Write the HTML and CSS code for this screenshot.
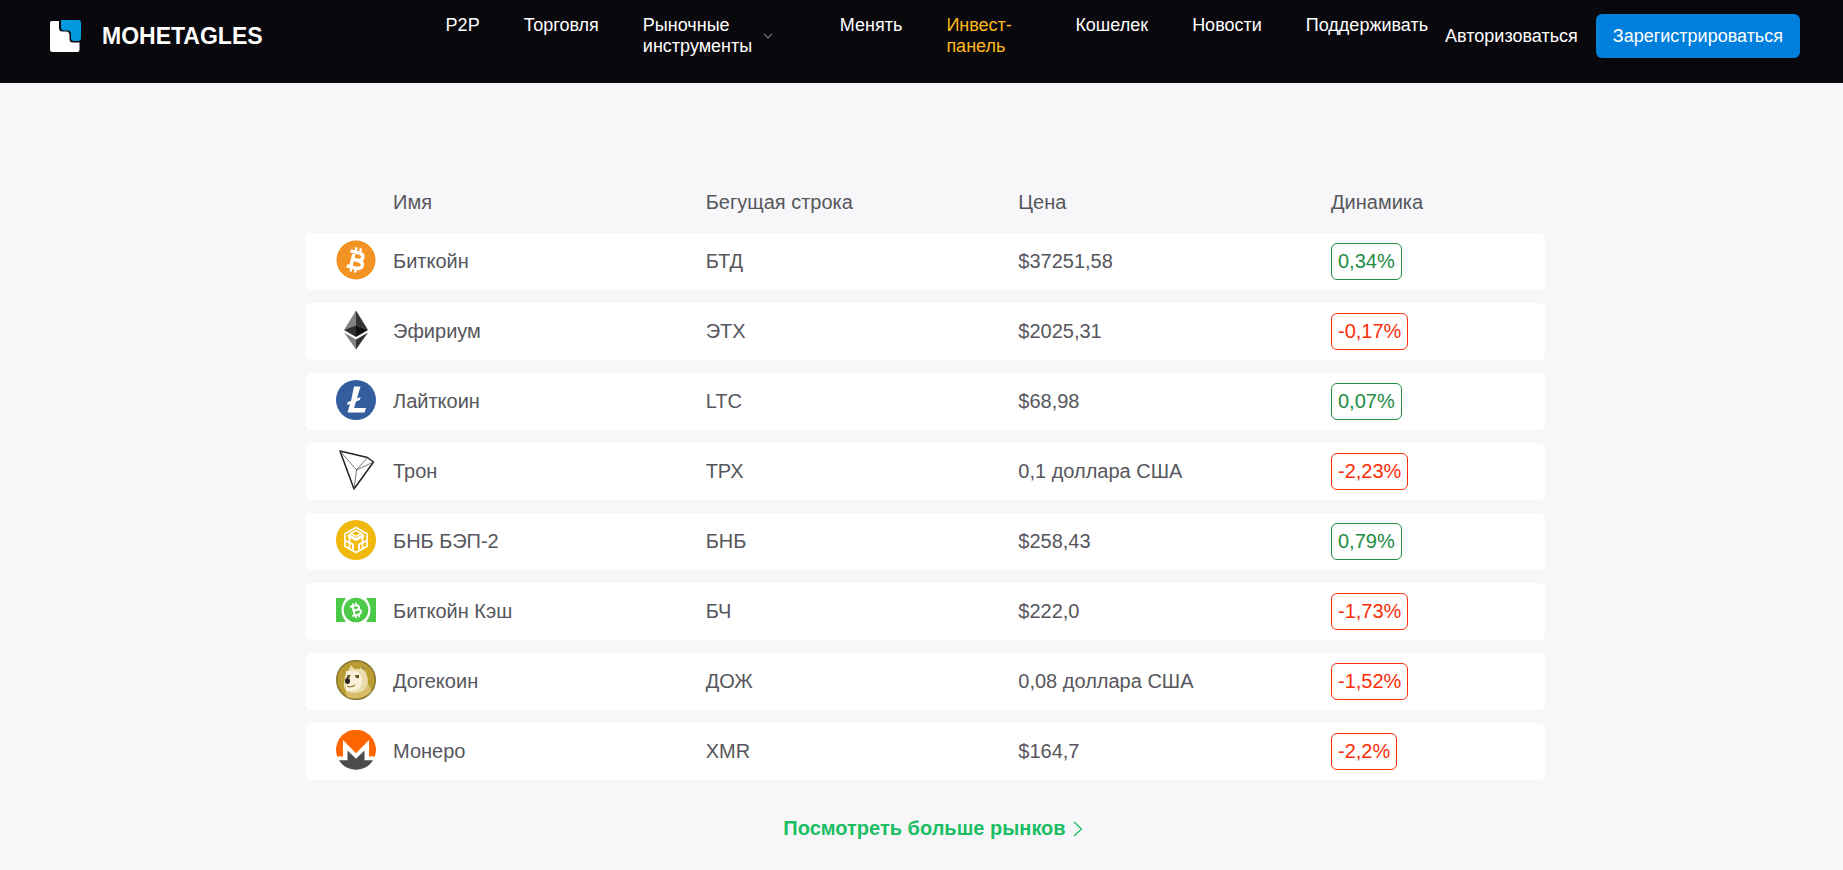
FILE: index.html
```html
<!DOCTYPE html>
<html lang="ru">

<head>
    <meta charset="UTF-8">
    <meta name="viewport" content="width=device-width, initial-scale=1.0">
    <title>MOHETAGLES</title>
    <link rel="stylesheet" href="styles.css">
</head>

<body>
    <header class="header">
        <a href="#" class="logo">
            <svg width="32" height="32" viewBox="0 0 32 32">
                <path d="M1.500 1H9v7q0 3.500 3.500 3.500H16q3.500 0 3.500 3.500v4q0 3.500 3.500 3.500h6.500V30q0 2-2 2h-25Q0 32 0 29.500V3q0-2 1.500-2z" fill="#fff" />
                <path d="M11 0h17.500Q31 0 31 2.500V18q0 3-3 3h-4q-3 0-3-3v-4q0-3.500-3.500-3.500H14q-3 0-3-3z" fill="#0099e0" />
            </svg>
            <span>MOHETAGLES</span>
        </a>
        <nav class="nav">
            <a href="#">P2P</a>
            <a href="#">Торговля</a>
            <a href="#" class="dropdown">
                <span>Рыночные инструменты</span>
                <svg width="10" height="6" viewBox="0 0 10 6">
                    <path d="M1 1l4 4 4-4" fill="none" stroke="#77777c" stroke-width="1.2" />
                </svg>
            </a>
            <a href="#">Менять</a>
            <a href="#" class="invest">Инвест-панель</a>
            <a href="#">Кошелек</a>
            <a href="#">Новости</a>
            <a href="#">Поддерживать</a>
        </nav>
        <div class="auth">
            <a href="#">Авторизоваться</a>
            <button type="button">Зарегистрироваться</button>
        </div>
    </header>

    <main class="markets">
        <table>
            <thead>
                <tr>
                    <td class="icon"></td>
                    <th>Имя</th>
                    <th>Бегущая строка</th>
                    <th>Цена</th>
                    <th class="change">Динамика</th>
                </tr>
            </thead>
            <tbody>
                <tr>
                    <td class="icon">
                        <svg width="40" height="40" viewBox="0 0 40 40">
                            <circle cx="20" cy="20" r="19.5" fill="#f39323" />
                            <g transform="rotate(14 20 20)" fill="none" stroke="#fff">
                                <path d="M12.5 12.5H21q5 0 5 3.7T21 20h-4.500M21 20q6.500 0 6.500 4T21 28h-8.500M16.500 12.500V28" stroke-width="3.4" />
                                <path d="M17.500 7.500v5M22 7.500v5M17.500 28v4.500M22 28v4.500" stroke-width="2.3" />
                            </g>
                        </svg>
                    </td>
                    <td>Биткойн</td>
                    <td>БТД</td>
                    <td>$37251,58</td>
                    <td><span class="badge up">0,34%</span></td>
                </tr>
                <tr>
                    <td class="icon">
                        <svg width="40" height="40" viewBox="0 0 40 40">
                            <path d="M20 .5v14.500L8 20z" fill="#828384" />
                            <path d="M20 .5V15l12 5z" fill="#343434" />
                            <path d="M20 15v12L8 20z" fill="#2f3030" />
                            <path d="M20 15v12l12-7z" fill="#131313" />
                            <path d="M8 22.500l12 7v10z" fill="#828384" />
                            <path d="M32 22.500l-12 7v10z" fill="#343434" />
                        </svg>
                    </td>
                    <td>Эфириум</td>
                    <td>ЭТХ</td>
                    <td>$2025,31</td>
                    <td><span class="badge down">-0,17%</span></td>
                </tr>
                <tr>
                    <td class="icon">
                        <svg width="40" height="40" viewBox="0 0 40 40">
                            <circle cx="20" cy="20" r="20" fill="#345d9d" />
                            <path d="M18 6.500h6.500l-3.600 12 3.700-1.400-.8 3-3.800 1.400-1.900 6.500H30L28.500 32.500H11.500l2.500-8.500-3 1.100.8-3 3.200-1.200z" fill="#fff" />
                        </svg>
                    </td>
                    <td>Лайткоин</td>
                    <td>LTC</td>
                    <td>$68,98</td>
                    <td><span class="badge up">0,07%</span></td>
                </tr>
                <tr>
                    <td class="icon">
                        <svg width="40" height="40" viewBox="0 0 40 40" fill="none" stroke-linejoin="round">
                            <path d="M4 1l27.500 6.500L37.500 12 18 39z" stroke="#222" stroke-width="1.500" />
                            <path d="M4 1l16.500 19L18 39M20.500 20l11-12.500M20.500 20l17-8" stroke="#555" stroke-width=".8" />
                        </svg>
                    </td>
                    <td>Трон</td>
                    <td>ТРХ</td>
                    <td>0,1 доллара США</td>
                    <td><span class="badge down">-2,23%</span></td>
                </tr>
                <tr>
                    <td class="icon">
                        <svg width="40" height="40" viewBox="0 0 40 40">
                            <circle cx="20" cy="20" r="20" fill="#f0b90b" />
                            <g fill="none" stroke="#fff">
                                <path d="M20 7.500l11 6.300v12.500L20 32.500 9 26.300V13.800z" stroke-width="1.700" />
                                <path d="M20 10.500l5.500 3-5.500 3-5.500-3zM9 20.500l4.500 2.500v5.500M31 20.500L26.500 23v5.500" stroke-width="1.500" />
                                <path d="M13.500 15.500v7l3.500 2v5M26.500 15.500v7l-3.500 2v5" stroke-width="2" />
                                <path d="M12 15l8 4.600 8-4.600" stroke-width="2.800" />
                            </g>
                        </svg>
                    </td>
                    <td>БНБ БЭП-2</td>
                    <td>БНБ</td>
                    <td>$258,43</td>
                    <td><span class="badge up">0,79%</span></td>
                </tr>
                <tr>
                    <td class="icon">
                        <svg width="40" height="40" viewBox="0 0 40 40">
                            <path d="M0 8h10q-9 12 0 24H0zM40 8H30q9 12 0 24h10z" fill="#4cca47" />
                            <circle cx="20" cy="20" r="12.300" fill="#4cca47" />
                            <g transform="rotate(-14 20 20)" fill="none" stroke="#fff">
                                <path d="M15 15.500h6q2.500 0 2.500 2.200T21 20h-3M21 20q3.500 0 3.500 2.400T21 25h-6M17.500 15.500V25" stroke-width="2" />
                                <path d="M18.500 12.500v3M21.500 12.500v3M18.500 25v3M21.500 25v3" stroke-width="1.500" />
                            </g>
                        </svg>
                    </td>
                    <td>Биткойн Кэш</td>
                    <td>БЧ</td>
                    <td>$222,0</td>
                    <td><span class="badge down">-1,73%</span></td>
                </tr>
                <tr>
                    <td class="icon">
                        <svg width="40" height="40" viewBox="0 0 40 40">
                            <circle cx="20" cy="20" r="19.300" fill="#b99c32" stroke="#83732f" stroke-width="1.400" />
                            <path d="M11 37q-2-4-1-7l21-7q4 4 4.500 8Q30 38 20 38.500q-5 0-9-1.500z" fill="#d7bd69" />
                            <path d="M8.500 20q0-7 4-9.500l2-5 4 3.500h5l4.500-4 2 8q3 7 1 13-3 7-12 7-8 0-10-4-2-3-.5-9z" fill="#eadcae" />
                            <path d="M10 11h7q9 0 9 9.500T18 31h-8z" fill="#f8f0d8" />
                            <path d="M25 8l3-3 1.500 6.500z" fill="#a68639" />
                            <path d="M11.500 15h3l-1 3h-3zM19 15h4v3h-3z" fill="#695224" />
                            <ellipse cx="11.500" cy="21" rx="2.500" ry="3" fill="#282421" />
                            <path d="M11 26q4 2 8-1" fill="none" stroke="#9c8042" stroke-width="1.200" />
                        </svg>
                    </td>
                    <td>Догекоин</td>
                    <td>ДОЖ</td>
                    <td>0,08 доллара США</td>
                    <td><span class="badge down">-1,52%</span></td>
                </tr>
                <tr>
                    <td class="icon">
                        <svg width="40" height="40" viewBox="0 0 40 40">
                            <path d="M1.200 26.500a20 20 0 1 1 37.600 0H33V10L20 23.300 7 10v16.500z" fill="#f60" />
                            <path d="M3 30.300h8.500V20.500l8.500 8.300 8.500-8.300v9.800H37a20 20 0 0 1-34 0z" fill="#4c4c4c" />
                        </svg>
                    </td>
                    <td>Монеро</td>
                    <td>XMR</td>
                    <td>$164,7</td>
                    <td><span class="badge down">-2,2%</span></td>
                </tr>
            </tbody>
        </table>
        <a href="#" class="more">
            Посмотреть больше рынков
            <svg width="10" height="16" viewBox="0 0 10 16">
                <path d="M1 1l7.500 7L1 15" fill="none" stroke="#1bbf62" stroke-width="1.300" />
            </svg>
        </a>
    </main>
</body>

</html>
```

FILE: styles.css
```css
/* General */
body {
    margin: 0;
    font-family: "Liberation Sans", Arial, sans-serif;
    background-color: #f7f7fa;
    color: #56565c;
}

a {
    color: inherit;
    text-decoration: none;
}

svg {
    display: block;
    flex: none;
}

/* Header */
.header {
    display: flex;
    align-items: center;
    padding: 14px 43px 25px 50px;
    background-color: #08080d;
    color: #fff;
    font-size: 18px;
    line-height: 21px;
}

.logo {
    display: flex;
    align-items: center;
    gap: 20px;
    font-size: 23px;
    font-weight: bold;
}

.nav {
    display: flex;
    align-items: flex-start;
    align-self: flex-start;
    gap: 44px;
    margin-left: auto;
    padding-top: 1px;
}

.nav .dropdown {
    display: flex;
    align-items: center;
    gap: 10px;
    width: 153px;
}

.dropdown span {
    width: 110px;
}

.nav .invest {
    width: 85px;
    color: #ffb81c;
}

.auth {
    display: flex;
    align-items: center;
    gap: 18px;
    margin-left: 17px;
}

.auth button {
    height: 44px;
    padding: 0 17px;
    font-family: inherit;
    font-size: 18px;
    color: #fff;
    background-color: #007fdd;
    border: none;
    border-radius: 6px;
    cursor: pointer;
}

/* Markets */
.markets {
    padding: 88px 0 28px 7px;
    font-size: 20px;
    line-height: 23px;
}

table {
    width: 100%;
    max-width: 1240px;
    margin: 0 auto;
    table-layout: fixed;
    border-collapse: separate;
    border-spacing: 0 13px;
}

th {
    height: 36px;
    padding: 0;
    font-weight: normal;
    text-align: left;
}

td {
    padding: 0;
}

.icon {
    width: 88px;
}

.change {
    width: 214px;
}

tbody td {
    height: 57px;
    background-color: #fff;
}

tbody td:first-child {
    border-radius: 6px 0 0 6px;
}

tbody td:last-child {
    border-radius: 0 6px 6px 0;
}

tbody .icon svg {
    margin: 0 0 4px 31px;
}

.badge {
    display: inline-block;
    padding: 6px;
    border: 1px solid;
    border-radius: 6px;
}

.up {
    color: #238b45;
}

.down {
    color: #fc2d08;
}

.more {
    display: flex;
    align-items: center;
    justify-content: center;
    gap: 7px;
    margin-top: 24px;
    padding-left: 16px;
    font-weight: bold;
    color: #1bbf62;
}
```
